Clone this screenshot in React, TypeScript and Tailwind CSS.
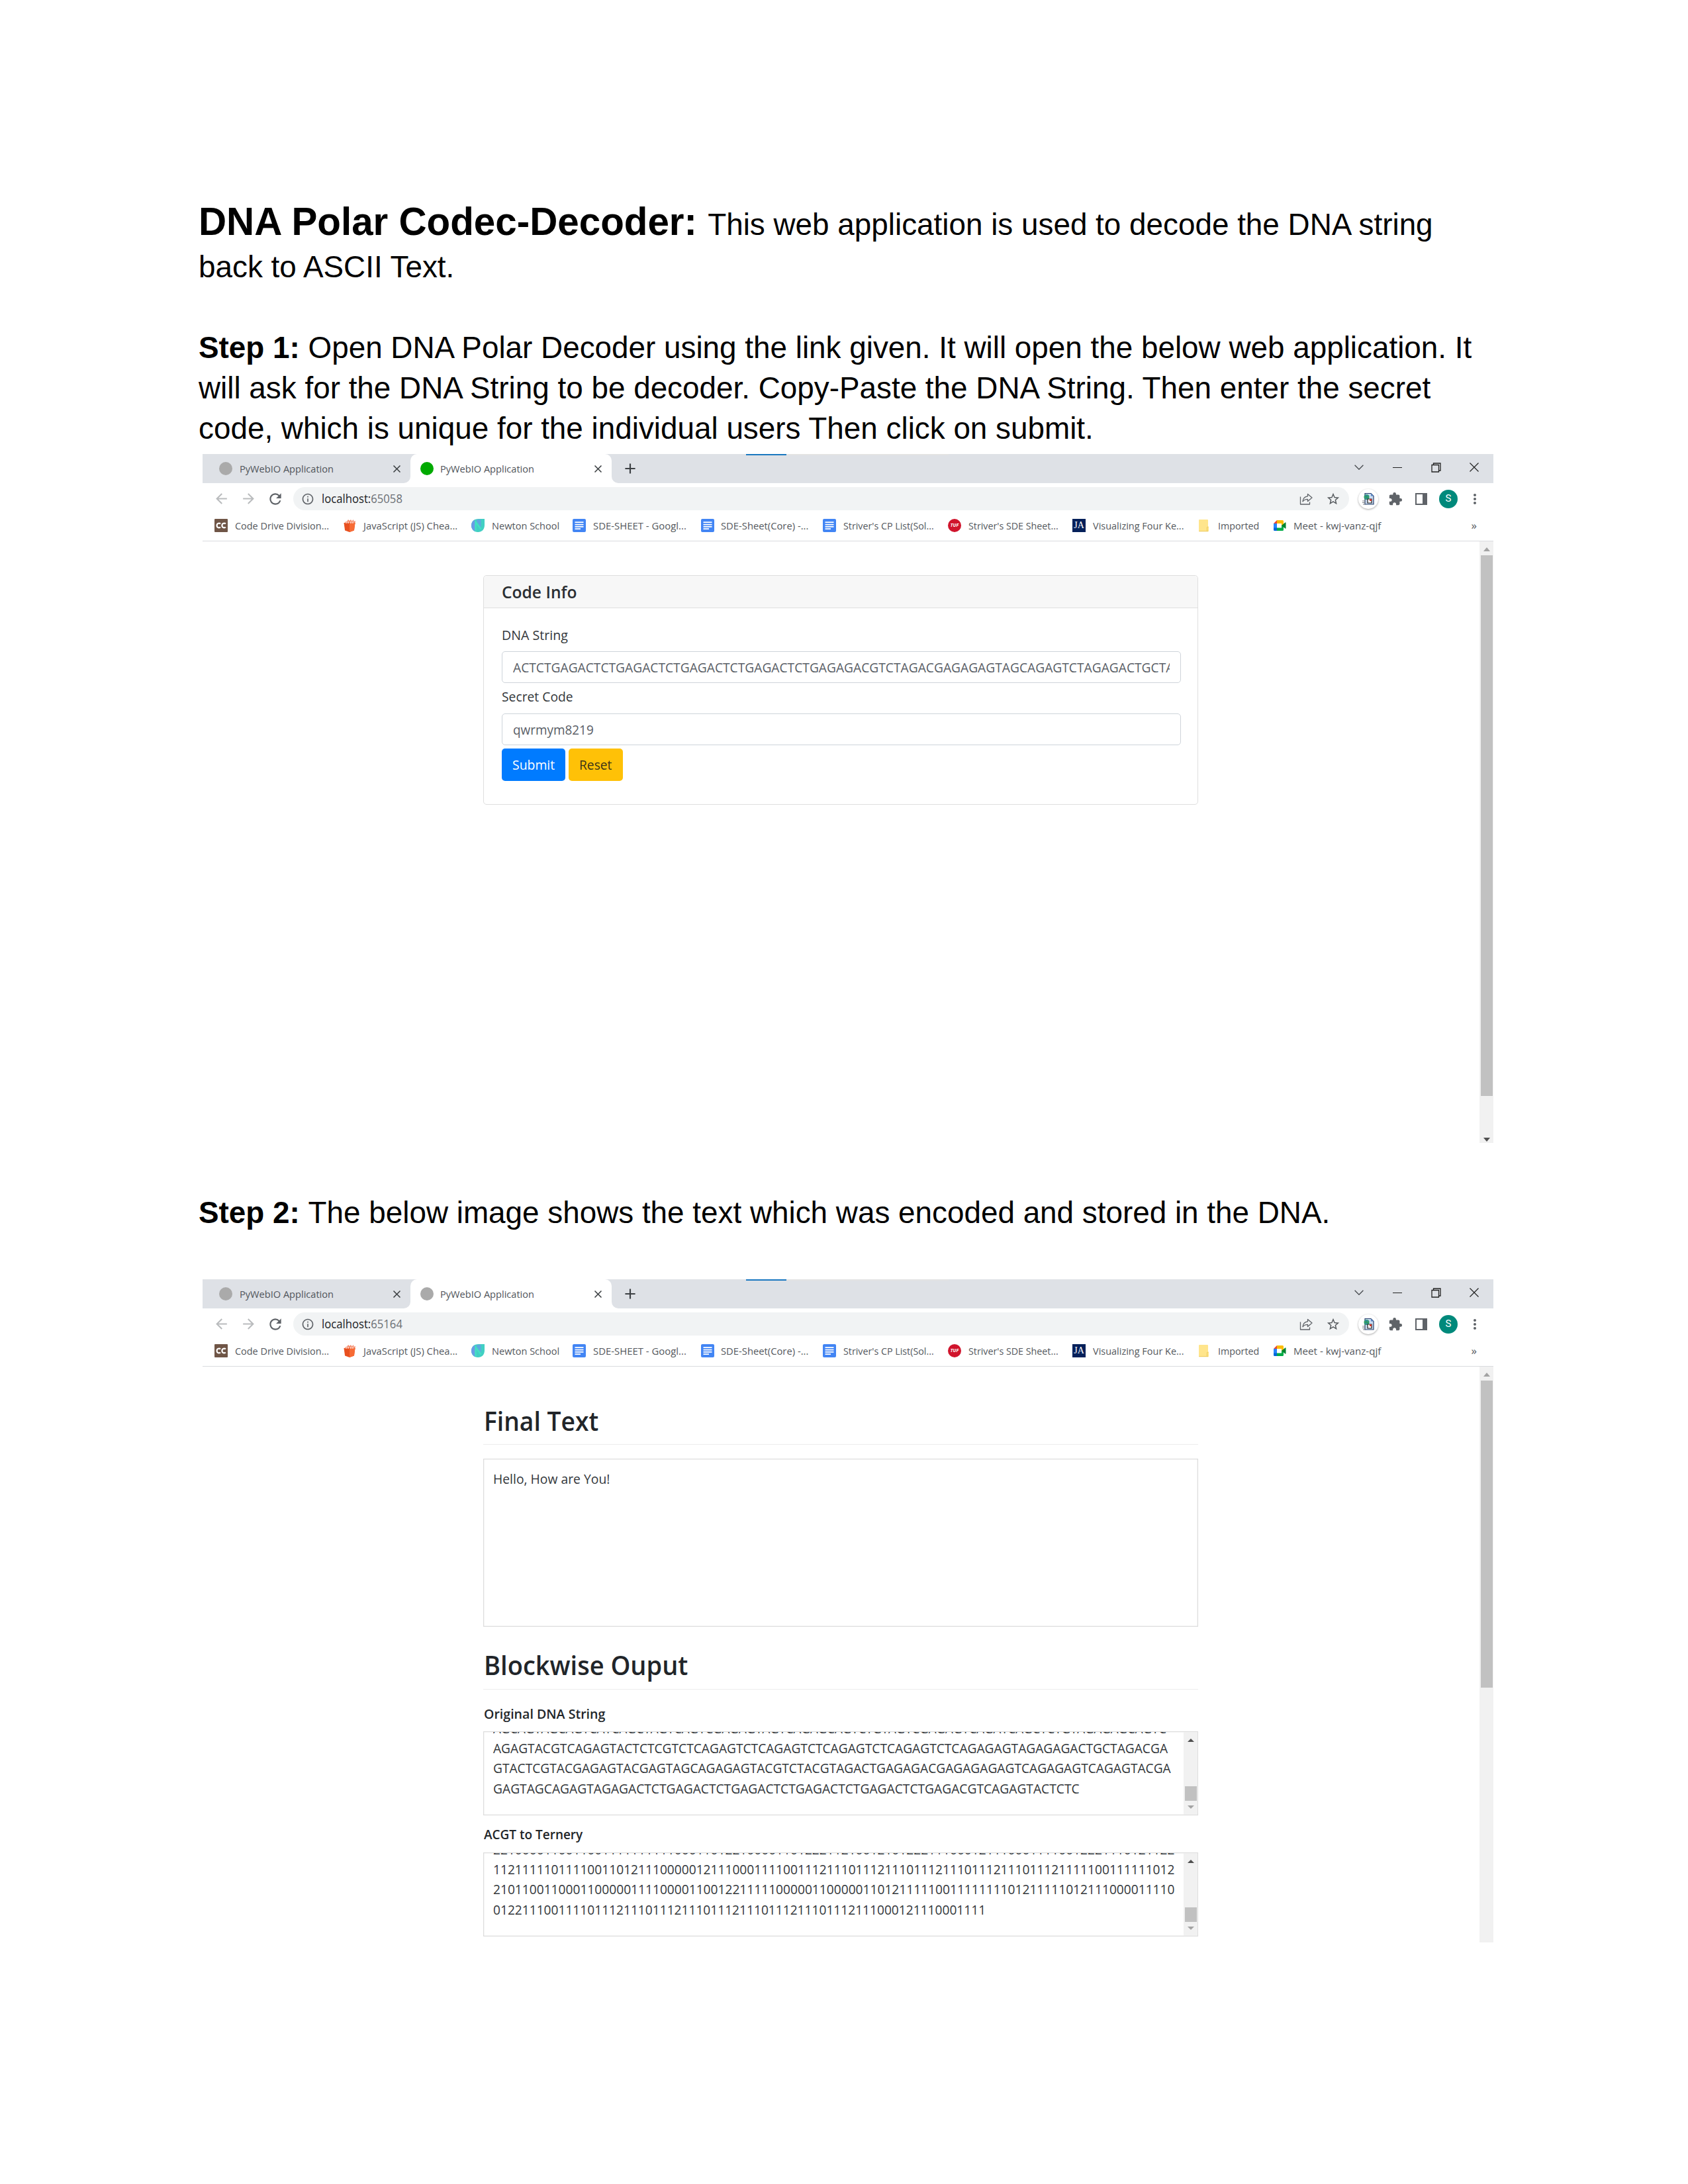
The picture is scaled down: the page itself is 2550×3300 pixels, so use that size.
import React, { useLayoutEffect, useRef } from "react";
import {
  MdAdd,
  MdArrowBack,
  MdArrowForward,
  MdClose,
  MdExtension,
  MdInfoOutline,
  MdMoreVert,
  MdRefresh,
  MdStarBorder,
} from "react-icons/md";

/** One line of text condensed or stretched to an exact width. */
function Fit({ w, children, className = "" }: { w: number; children: React.ReactNode; className?: string }) {
  const ref = useRef<HTMLSpanElement>(null);
  useLayoutEffect(() => {
    const el = ref.current;
    if (el && el.offsetWidth) el.style.transform = `scaleX(${w / el.offsetWidth})`;
  }, [w, children]);
  return (
    <span className={`block shrink-0 ${className}`} style={{ width: w }}>
      <span ref={ref} className="inline-block origin-left whitespace-pre">
        {children}
      </span>
    </span>
  );
}

function CodeChefIcon() {
  return (
    <svg viewBox="0 0 20 20" className="size-5 shrink-0">
      <rect width="20" height="20" rx="1" fill="#6f5546" />
      <path d="M9 7.400C8 6.300 3.600 6 3.600 10s4.400 3.700 5.400 2.600M16.800 7.400c-1-1.100-5.400-1.400-5.400 2.600s4.400 3.700 5.400 2.600" fill="none" stroke="#fff" strokeWidth="2.200" />
    </svg>
  );
}

function BucketIcon() {
  return (
    <svg viewBox="0 0 20 20" className="size-5 shrink-0">
      <path d="M2 7.500 4 4l2.500-.5L8 1l2 2 2-2 1.500 2.500L16 1l.5 3L19 3l-1 5z" fill="#f58a6a" />
      <path d="M1.500 6h17l-1.600 11.400L10 20l-6.900-2.600z" fill="#e8501f" />
      <path d="M10 6h8.500l-1.600 11.400L10 20z" fill="#f76b35" />
      <path d="M5 4v3M8 4v3M12 4v3M15 4v3" stroke="#fff" strokeWidth="1" />
    </svg>
  );
}

function NewtonIcon() {
  return (
    <svg viewBox="0 0 20 20" className="size-5 shrink-0">
      <path d="M20 0v9c0 7-4 11-10 11S0 16 0 10 4 0 11 0z" fill="#41cfc3" />
      <path d="M5.500 1.200v17.500C2 17 0 14 0 10s2-7 5.500-8.800z" fill="#6a9be6" />
      <path d="M14.500 1v12L8 4V1z" fill="#5fa8e0" />
      <path d="M6.500 18V4.500l8 11" fill="none" stroke="#43dfc4" strokeWidth="2.400" />
    </svg>
  );
}

function DocsIcon() {
  return (
    <svg viewBox="0 0 20 20" className="size-5 shrink-0">
      <rect width="20" height="20" rx="2" fill="#4285f4" />
      <path d="M3.500 5.200h13M3.500 8.600h13M3.500 11.900h13M3.500 15.200h8.500" stroke="#fff" strokeWidth="1.700" />
    </svg>
  );
}

function TufIcon() {
  return (
    <span className="flex size-5 shrink-0 items-center justify-center rounded-full bg-[#d0142c] text-[7px] font-bold italic text-white">
      TUF
    </span>
  );
}

function JaIcon() {
  return (
    <span className="flex size-5 shrink-0 items-center justify-center bg-[#04205a] font-['Liberation_Serif',serif] text-[14px] text-white">
      JA
    </span>
  );
}

function FolderIcon() {
  return (
    <svg viewBox="0 0 20 20" className="size-5 shrink-0">
      <path d="M3 1h12a1 1 0 0 1 1 1v10h1v6.500a1 1 0 0 1-1 .5H3a1 1 0 0 1-1-1V2a1 1 0 0 1 1-1z" fill="#ffe58c" />
      <path d="M14.500 18.500V13q.5-1.500 2-1M2.200 18.700H16" fill="none" stroke="#ecc95a" strokeWidth="1" />
    </svg>
  );
}

function MeetIcon() {
  return (
    <svg viewBox="0 0 20 20" className="size-5 shrink-0">
      <path d="M1 7 6 2v5z" fill="#ea4335" />
      <path d="M6 2h8.500q1.500 0 1.500 1.500V9l-3 1V7H6z" fill="#fbbc04" />
      <path d="M1 7h5v7H1z" fill="#2684fc" />
      <path d="M1 13.500h5V18H2.500Q1 18 1 16.500z" fill="#0066da" />
      <path d="M6 13.500h7V10l3-1v7.500q0 1.500-1.500 1.500H6z" fill="#00ac47" />
      <path d="m13 10 5.500-4.600q1-.6 1 .6v8q0 1.200-1 .6z" fill="#00832d" />
    </svg>
  );
}

function ShareIcon() {
  return (
    <svg viewBox="0 0 20 20" className="size-5 shrink-0" fill="none" stroke="#5f6368" strokeWidth="1.300" strokeLinejoin="round">
      <path d="M1.500 6.500V18h14v-3.500" />
      <path d="M12.500 2.500 19 8l-6.500 5.500v-3.200c-3.500 0-5.800 1-7.500 3.500.4-4.500 3-7.500 7.500-8z" />
    </svg>
  );
}

function ExtensionPageIcon() {
  return (
    <svg viewBox="0 0 20 20" className="size-5 shrink-0">
      <path d="M5 1.500h9l4 4V18H5z" fill="#c9dcf2" stroke="#27406d" strokeWidth="1.200" />
      <path d="M14 1.500v4h4z" fill="#5b86c4" />
      <circle cx="7.500" cy="7" r="4" fill="#2c9b61" />
      <path d="M5 5q3-2 5 1M5 8q2 2 4 1" stroke="#3b7fd0" strokeWidth="1" fill="none" />
      <path d="M9 10h6v6H9z" fill="#fff" stroke="#222" strokeWidth="1.200" />
      <path d="M12 10h3v3h-3z" fill="#d33c2f" />
      <path d="M1 13h5M1 15.500h5M2 18h4" stroke="#7a7f86" strokeWidth="1" />
    </svg>
  );
}

type Bookmark = { label: string; w: number; text: number; icon: React.ReactNode };

const bookmarks: Bookmark[] = [
  { label: "Code Drive Division...", w: 194, text: 142.5, icon: <CodeChefIcon /> },
  { label: "JavaScript (JS) Chea...", w: 194, text: 142, icon: <BucketIcon /> },
  { label: "Newton School", w: 153, text: 102, icon: <NewtonIcon /> },
  { label: "SDE-SHEET - Googl...", w: 193.5, text: 141, icon: <DocsIcon /> },
  { label: "SDE-Sheet(Core) -...", w: 184.5, text: 132, icon: <DocsIcon /> },
  { label: "Striver's CP List(Sol...", w: 189, text: 137, icon: <DocsIcon /> },
  { label: "Striver's SDE Sheet...", w: 188, text: 136, icon: <TufIcon /> },
  { label: "Visualizing Four Ke...", w: 189, text: 137, icon: <JaIcon /> },
  { label: "Imported", w: 114, text: 62, icon: <FolderIcon /> },
  { label: "Meet - kwj-vanz-qjf", w: 163, text: 132, icon: <MeetIcon /> },
];

function Browser({ port, dot, children, thumb, height, downDark }: {
  port: string;
  dot: string;
  children: React.ReactNode;
  thumb: string;
  height: string;
  downDark?: boolean;
}) {
  return (
    <section className={`flex w-[1950px] flex-col overflow-hidden bg-white font-['Open_Sans','Noto_Sans',sans-serif] ${height}`}>
      <div className="flex h-11 shrink-0 text-[15px] leading-[44px] text-[#50545a]">
        <div className="flex w-[314px] items-center rounded-br-[10px] bg-[#dee1e6] pl-[25px]">
          <span className="size-5 rounded-full bg-[#aaaaaa]" />
          <Fit w={142} className="ml-[11px]">PyWebIO Application</Fit>
          <MdClose className="ml-[86px] size-[19px] text-[#3c4043]" />
        </div>
        <div className="w-[304px] bg-[linear-gradient(#dee1e6_50%,white_50%)]">
          <div className="flex h-full items-center rounded-t-[10px] bg-white pl-[15px]">
            <span className={`size-5 rounded-full ${dot}`} />
            <Fit w={142} className="ml-[10px]">PyWebIO Application</Fit>
            <MdClose className="ml-[87px] size-[19px] text-[#3c4043]" />
          </div>
        </div>
        <div className="relative flex flex-1 items-center rounded-bl-[10px] bg-[#dee1e6] pl-[15px]">
          <span className="absolute left-[203px] top-0 h-0.5 w-[61px] bg-[#1a78c0]" />
          <span className="absolute left-[264px] top-0 h-0.5 w-[245px] bg-[#e3e3e3]" />
          <MdAdd className="size-[26px] text-[#3c4043]" />
          <div className="ml-auto flex pb-1">
            <span className="flex w-[58px] items-center justify-center">
              <svg viewBox="0 0 14 8" className="h-2 w-[14px]" fill="none" stroke="#44474b" strokeWidth="1.300"><path d="m.6.800 6.400 6.400L13.400.8" /></svg>
            </span>
            <span className="flex w-[58px] items-center justify-center">
              <span className="h-px w-[14px] bg-[#222]" />
            </span>
            <span className="flex w-[58px] items-center justify-center">
              <svg viewBox="0 0 15 15" className="size-[15px]" fill="none" stroke="#222" strokeWidth="1.300"><path d="M1 3.500h10.500V14H1zM3.500 3.500V1H14v11h-2.500" /></svg>
            </span>
            <span className="flex w-[58px] items-center justify-center">
              <svg viewBox="0 0 14 14" className="size-[14px]" fill="none" stroke="#222" strokeWidth="1.200"><path d="m.5.500 13 13M13.500.5.500 13.500" /></svg>
            </span>
          </div>
        </div>
      </div>

      <div className="flex h-[41px] shrink-0 items-center pl-[18px] pr-[25px] pt-[6px]">
        <span className="flex w-5 justify-center"><MdArrowBack className="size-[25px] shrink-0 text-[#babcbe]" /></span>
        <span className="ml-[21px] flex w-5 justify-center"><MdArrowForward className="size-[25px] shrink-0 text-[#babcbe]" /></span>
        <span className="ml-[21px] flex w-5 justify-center"><MdRefresh className="size-[26px] shrink-0 text-[#5f6368]" /></span>
        <div className="ml-[17px] flex h-[35px] flex-1 items-center rounded-full bg-[#f1f3f4] pl-3 pr-[13px] text-[17.500px] leading-[35px]">
          <MdInfoOutline className="size-5 text-[#5f6368]" />
          <Fit w={122} className="ml-[11px] text-[#6b6f74]"><span className="text-[#202124]">localhost:</span>{port}</Fit>
          <span className="ml-auto"><ShareIcon /></span>
          <MdStarBorder className="ml-5 size-[22px] text-[#55595d]" />
        </div>
        <span className="ml-[14px] flex size-[30px] items-center justify-center rounded-full bg-white shadow-[0_1px_3px_rgba(0,0,0,0.35)]">
          <ExtensionPageIcon />
        </span>
        <MdExtension className="ml-[15px] size-[22px] text-[#5f6368]" />
        <span className="ml-[19px] h-[18px] w-[18px] border-2 border-r-[7px] border-[#5f6368]" />
        <span className="ml-[18px] flex size-7 items-center justify-center rounded-full bg-[#00897b] font-['Roboto',sans-serif] text-[15px] text-white">S</span>
        <span className="ml-[23px] flex w-[6px] justify-center"><MdMoreVert className="size-6 shrink-0 text-[#5f6368]" /></span>
      </div>

      <div className="flex h-[47px] shrink-0 items-center border-b border-[#d9dbdf] pl-[18px] text-[15px] leading-[46px] text-[#54585d]">
        {bookmarks.map((b) => (
          <div key={b.label} className="flex shrink-0 items-center gap-[10.500px]" style={{ width: b.w }}>
            {b.icon}
            <Fit w={b.text}>{b.label}</Fit>
          </div>
        ))}
        <span className="ml-auto mr-[25px] text-[17px] leading-[40px]">»</span>
      </div>

      <div className="flex flex-1">
        <div className="flex flex-1 flex-col pl-[424px]">{children}</div>
        <div className="flex w-[21px] flex-col items-center bg-[#f1f1f1]">
          <svg viewBox="0 0 10 6" className="mt-[9px] h-[6px] w-[10px] shrink-0"><path d="M5 0 10 6H0z" fill="#a3a3a3" /></svg>
          <div className={`mt-[6px] w-[18px] shrink-0 bg-[#c1c1c1] ${thumb}`} />
          {downDark && (
            <svg viewBox="0 0 10 6" className="mb-[2px] mt-auto h-[6px] w-[10px] shrink-0"><path d="M0 0h10L5 6z" fill="#505050" /></svg>
          )}
        </div>
      </div>
    </section>
  );
}

const dnaInput =
  "ACTCTGAGACTCTGAGACTCTGAGACTCTGAGACTCTGAGAGACGTCTAGACGAGAGAGTAGCAGAGTCTAGAGACTGCTA";

function CodeForm() {
  return (
    <div className="mt-[51px] h-[347px] w-[1080px] rounded-[5px] border border-[#dfdfdf] text-[20px] leading-[30px] text-[#33373b]">
      <div className="h-[49px] rounded-t-[5px] border-b border-[#dfdfdf] bg-[#f7f7f7] pl-[27px] text-[25px] font-semibold leading-[48px] text-[#2b2f33]">
        <Fit w={113}>Code Info</Fit>
      </div>
      <div className="pl-[27px] pt-[26px]">
        <Fit w={100}>DNA String</Fit>
        <div className="mt-[9px] h-12 w-[1026px] rounded-[5px] border border-[#ced4da] px-4 leading-[48px] text-[#5a6067]">
          <div className="w-[992px] overflow-hidden">
            <Fit w={998}>{dnaInput}</Fit>
          </div>
        </div>
        <Fit w={108} className="mt-[6px]">Secret Code</Fit>
        <div className="mt-[10px] h-12 w-[1026px] rounded-[5px] border border-[#ced4da] px-4 leading-[48px] text-[#5a6067]">
          <Fit w={122}>qwrmym8219</Fit>
        </div>
        <div className="mt-[5px] flex gap-[5px] leading-[49px]">
          <div className="h-[49px] w-[96px] rounded-[5px] bg-[#007bff] pl-4 text-white"><Fit w={64}>Submit</Fit></div>
          <div className="h-[49px] w-[82px] rounded-[5px] bg-[#ffc107] pl-4 text-[#3a3418]"><Fit w={49}>Reset</Fit></div>
        </div>
      </div>
    </div>
  );
}

type Line = { text: string; w: number };

const dnaLines: Line[] = [
  { text: "AGCAGTAGCAGTCATCAGCTAGTCAGTCGAGAGTAGTCAGAGCAGTCTGTAGTCGAGAGTCAGATCAGCTCTGTAGAGAGCAGTC", w: 1017 },
  { text: "AGAGTACGTCAGAGTACTCTCGTCTCAGAGTCTCAGAGTCTCAGAGTCTCAGAGTCTCAGAGAGTAGAGAGACTGCTAGACGA", w: 1019 },
  { text: "GTACTCGTACGAGAGTACGAGTAGCAGAGAGTACGTCTACGTAGACTGAGAGACGAGAGAGAGTCAGAGAGTCAGAGTACGA", w: 1023.5 },
  { text: "GAGTAGCAGAGTAGAGACTCTGAGACTCTGAGACTCTGAGACTCTGAGACTCTGAGACGTCAGAGTACTCTC", w: 886 },
];

const ternaryLines: Line[] = [
  { text: "2210000110011001111111111000110122100001101222112100121012221110001211100011110012221110121122", w: 1029.5 },
  { text: "1121111101111001101211100000121110001111001112111011121110111211101112111011121111100111111012", w: 1029.5 },
  { text: "2101100110001100000111100001100122111110000011000001101211111001111111101211111012111000011110", w: 1029.5 },
  { text: "01221110011110111211101112111011121110111211101112111000121110001111", w: 744.5 },
];

function OutputBox({ lines }: { lines: Line[] }) {
  return (
    <div className="flex h-[127px] w-[1080px] border border-[#dcdcdc] shadow-[inset_0_0_2px_rgba(0,0,0,0.12)]">
      <div className="flex-1 overflow-hidden pl-[13.500px] text-[20px] leading-[30.400px] text-[#33373b]">
        <div className="-mt-[20.500px]">
          {lines.map((l) => (
            <Fit key={l.text} w={l.w} className="h-[30.400px]">{l.text}</Fit>
          ))}
        </div>
      </div>
      <div className="flex w-[21px] flex-col items-center bg-[#f1f1f1]">
        <svg viewBox="0 0 10 5" className="mt-[10px] h-[5px] w-[10px] shrink-0"><path d="M5 0 10 5H0z" fill="#505050" /></svg>
        <div className="mt-[67px] h-[22px] w-[18px] shrink-0 bg-[#c1c1c1]" />
        <svg viewBox="0 0 10 5" className="mt-[7px] h-[5px] w-[10px] shrink-0"><path d="M0 0h10L5 5z" fill="#a3a3a3" /></svg>
      </div>
    </div>
  );
}

function Output() {
  return (
    <div className="w-[1080px] text-[#212529]">
      <div className="mt-[56px] h-[62px] border-b border-[#ececec] pl-px text-[40px] font-semibold leading-[51px]">
        <Fit w={173}>Final Text</Fit>
      </div>
      <div className="mt-[21px] h-[254px] border border-[#dcdcdc] pl-[14px] pt-[15px] text-[20px] leading-[30px] text-[#33373b] shadow-[inset_0_0_2px_rgba(0,0,0,0.12)]">
        <Fit w={176}>Hello, How are You!</Fit>
      </div>
      <div className="mt-[32px] h-[63px] border-b border-[#ececec] pl-px text-[40px] font-semibold leading-[51px]">
        <Fit w={308}>Blockwise Ouput</Fit>
      </div>
      <Fit w={183} className="mt-[22px] pl-px text-[20px] font-semibold leading-[30px]">Original DNA String</Fit>
      <div className="mt-[11px]"><OutputBox lines={dnaLines} /></div>
      <Fit w={149} className="mt-[14px] pl-px text-[20px] font-semibold leading-[30px]">ACGT to Ternery</Fit>
      <div className="mt-[12px]"><OutputBox lines={ternaryLines} /></div>
    </div>
  );
}

export default function App() {
  return (
    <main className="flex h-[3300px] w-[2550px] flex-col overflow-hidden whitespace-nowrap bg-white pl-[300px] pt-[298px] font-['Liberation_Sans',sans-serif] text-[45.830px] leading-[61px] text-black">
      <h1 className="h-[75px] font-normal leading-[73px]">
        <span className="text-[58.330px] font-bold">DNA Polar Codec-Decoder: </span>
        This web application is used to decode the DNA string
      </h1>
      <p>back to ASCII Text.</p>
      <p className="mt-[61px]"><b>Step 1: </b>Open DNA Polar Decoder using the link given. It will open the below web application. It</p>
      <p>will ask for the DNA String to be decoder. Copy-Paste the DNA String. Then enter the secret</p>
      <p>code, which is unique for the individual users Then click on submit.</p>
      <div className="ml-[6px] mt-[8px]">
        <Browser port="65058" dot="bg-[#00aa00]" thumb="h-[817px]" height="h-[1041px]" downDark>
          <CodeForm />
        </Browser>
      </div>
      <p className="mt-[75px]"><b>Step 2: </b>The below image shows the text which was encoded and stored in the DNA.</p>
      <div className="ml-[6px] mt-[70px]">
        <Browser port="65164" dot="bg-[#aaaaaa]" thumb="h-[464px]" height="h-[1002px]">
          <Output />
        </Browser>
      </div>
    </main>
  );
}
